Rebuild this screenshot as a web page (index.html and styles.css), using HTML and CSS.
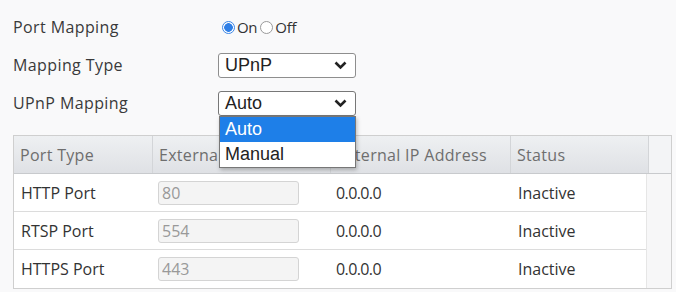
FILE: index.html
```html
<!DOCTYPE html>
<html lang="en">
<head>
	<meta charset="UTF-8">
	<title>Port Mapping</title>
	<link rel="stylesheet" href="styles.css">
</head>
<body>
	<div class="page">
		<div class="form">
			<div class="form_row">
				<div class="form_label">Port Mapping</div>
				<div class="radios">
					<span class="radio radio_on"></span><span class="radio_text">On</span>
					<span class="radio"></span><span class="radio_text">Off</span>
				</div>
			</div>
			<div class="form_row">
				<div class="form_label">Mapping Type</div>
				<div class="select">
					<span>UPnP</span>
					<svg class="chevron" width="13" height="9" viewBox="0 0 13 9"><path d="M1.5 1.5 L6.5 6.5 L11.5 1.5" fill="none" stroke="#222" stroke-width="2.6"/></svg>
				</div>
			</div>
			<div class="form_row">
				<div class="form_label">UPnP Mapping</div>
				<div class="select select_open">
					<span>Auto</span>
					<svg class="chevron" width="13" height="9" viewBox="0 0 13 9"><path d="M1.5 1.5 L6.5 6.5 L11.5 1.5" fill="none" stroke="#222" stroke-width="2.6"/></svg>
					<ul class="dropdown">
						<li class="active">Auto</li>
						<li>Manual</li>
					</ul>
				</div>
			</div>
		</div>

		<div class="table">
			<div class="table_head">
				<div class="th">Port Type</div>
				<div class="th">External Port</div>
				<div class="th">External IP Address</div>
				<div class="th">Status</div>
				<div class="th th_gap"></div>
			</div>
			<div class="table_body">
				<div class="rows">
					<div class="tr">
						<div class="td">HTTP Port</div>
						<div class="td"><input class="port" type="text" value="80" disabled></div>
						<div class="td td_ip">0.0.0.0</div>
						<div class="td">Inactive</div>
					</div>
					<div class="tr">
						<div class="td">RTSP Port</div>
						<div class="td"><input class="port" type="text" value="554" disabled></div>
						<div class="td td_ip">0.0.0.0</div>
						<div class="td">Inactive</div>
					</div>
					<div class="tr">
						<div class="td">HTTPS Port</div>
						<div class="td"><input class="port" type="text" value="443" disabled></div>
						<div class="td td_ip">0.0.0.0</div>
						<div class="td">Inactive</div>
					</div>
				</div>
				<div class="track"></div>
			</div>
		</div>
	</div>
</body>
</html>
```

FILE: styles.css
```css
* {
	margin: 0;
	padding: 0;
	box-sizing: border-box;
}
body {
	background-color: #f9f9fa;
	font-family: "Open Sans", "Noto Sans", sans-serif;
	font-size: 16px;
	color: #333;
}
li {
	list-style: none;
}
.page {
	width: 676px;
	height: 292px;
	padding: 8px 4px 0 13px;
}

/* form */
.form_row {
	display: flex;
	align-items: center;
	height: 38px;
}
.form_label {
	width: 205px;
	color: #3a3a3a;
	letter-spacing: 0.4px;
}
.radios {
	display: flex;
	align-items: center;
	padding-left: 4px;
	font-size: 15px;
	letter-spacing: -0.3px;
}
.radio {
	width: 13px;
	height: 13px;
	border: 1px solid #9a9a9a;
	border-radius: 50%;
	background-color: #fff;
}
.radio_on {
	border-color: #3b86e6;
	background: radial-gradient(circle, #2f7fe6 0, #2f7fe6 4px, #fff 4.6px);
}
.radio_text {
	margin: 0 3px 0 2px;
}
.select {
	position: relative;
	display: flex;
	align-items: center;
	justify-content: space-between;
	width: 138px;
	height: 25px;
	padding: 0 8px 0 6px;
	border: 1px solid #8e8e8e;
	border-radius: 3px;
	background-color: #fff;
	font-family: "Liberation Sans", Arial, sans-serif;
	font-size: 18px;
	color: #222;
}
.select_open {
	border-color: #777;
}
.dropdown {
	position: absolute;
	top: 24px;
	left: 0;
	z-index: 10;
	width: 137px;
	border: 1px solid #777;
	background-color: #fff;
	box-shadow: 1px 2px 4px rgba(0,0,0,0.25);
}
.dropdown li {
	height: 25px;
	line-height: 25px;
	padding-left: 5px;
}
.dropdown .active {
	background-color: #1e7fe8;
	color: #fff;
}

/* table */
.table {
	width: 659px;
	margin-top: 13px;
	border: 1px solid #cfcfcf;
	background-color: #fff;
}
.table_head {
	display: grid;
	grid-template-columns: 139px 178px 180px 138px 1fr;
	height: 38px;
	border-bottom: 1px solid #c8cacd;
	background: linear-gradient(#eef0f2, #dfe1e5);
	color: #6e6e6e;
	letter-spacing: 0.3px;
}
.th {
	display: flex;
	align-items: center;
	padding-left: 6px;
	border-right: 1px solid #d3d5d8;
}
.th_gap {
	border-right: none;
	background-color: #f3f4f6;
}
.table_body {
	display: flex;
}
.rows {
	width: 632px;
}
.tr {
	display: grid;
	grid-template-columns: 139px 178px 180px 1fr;
	height: 38px;
	border-bottom: 1px solid #dcdcdc;
}
.tr:last-child {
	border-bottom: none;
}
.td {
	display: flex;
	align-items: center;
	padding-left: 7px;
}
.td_ip {
	padding-left: 5px;
	letter-spacing: -0.6px;
}
.port {
	width: 141px;
	height: 24px;
	margin-left: -2px;
	padding-left: 3px;
	border: 1px solid #d4d4d4;
	border-radius: 3px;
	background-color: #f4f4f4;
	font-family: "Open Sans", "Noto Sans", sans-serif;
	font-size: 16px;
	color: #999;
}
.track {
	flex: 1;
	border-left: 1px solid #e6e6e6;
	background-color: #f7f7f8;
}
```
